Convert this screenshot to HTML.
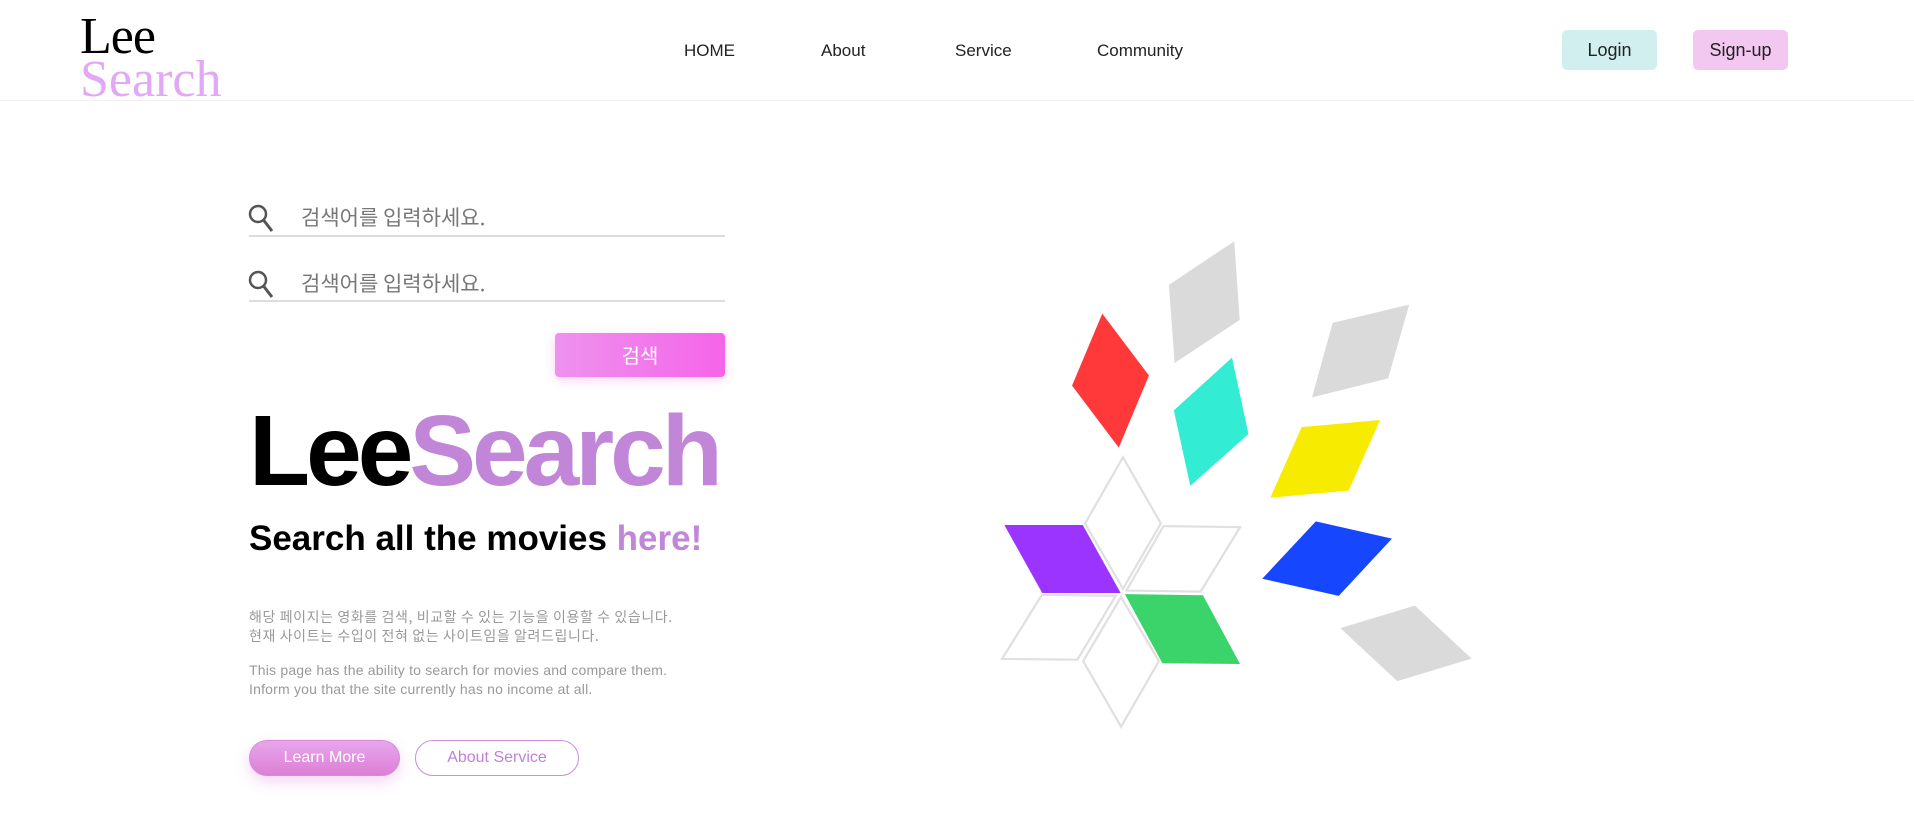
<!DOCTYPE html>
<html><head><meta charset="utf-8"><style>
*{margin:0;padding:0;box-sizing:border-box}
body{width:1914px;height:838px;background:#fff;position:relative;overflow:hidden;font-family:"Liberation Sans","Noto Sans CJK KR",sans-serif}
.abs{position:absolute;white-space:nowrap}
.logo{font-family:"Liberation Serif",serif;font-size:52px;line-height:1;letter-spacing:-1px}
.nav{font-size:17px;color:#222;top:41px}
.btn{position:absolute;top:30px;height:40px;width:95px;border-radius:5px;font-size:18px;color:#222;text-align:center;line-height:40px}
.inp{position:absolute;left:249px;width:476px;border-bottom:2px solid #ddd;height:0}
.ph{font-size:21px;color:#777;font-family:"Noto Sans CJK KR",sans-serif}
.p{font-size:14px;color:#999;left:249px;font-family:"Noto Sans CJK KR",sans-serif;letter-spacing:0.6px}
</style></head><body>
<div class="abs logo" style="left:80px;top:11px;color:#000">Lee</div>
<div class="abs logo" style="left:80px;top:54px;color:#e2a8f6;letter-spacing:0">Search</div>
<div class="abs nav" style="left:684px">HOME</div>
<div class="abs nav" style="left:821px">About</div>
<div class="abs nav" style="left:955px">Service</div>
<div class="abs nav" style="left:1097px">Community</div>
<div class="btn" style="left:1562px;background:#d0efee">Login</div>
<div class="btn" style="left:1693px;background:#f2c8f1">Sign-up</div>
<div class="abs" style="left:0;top:100px;width:1914px;height:1px;background:#eee"></div>

<svg class="abs" style="left:248px;top:202px" width="40" height="40"><circle cx="10" cy="12" r="8" fill="none" stroke="#555" stroke-width="2.5"/><line x1="15.5" y1="18" x2="24" y2="29" stroke="#555" stroke-width="3"/></svg>
<div class="abs ph" style="left:301px;top:202px">검색어를 입력하세요.</div>
<div class="inp" style="top:235px"></div>
<svg class="abs" style="left:248px;top:268px" width="40" height="40"><circle cx="10" cy="12" r="8" fill="none" stroke="#555" stroke-width="2.5"/><line x1="15.5" y1="18" x2="24" y2="29" stroke="#555" stroke-width="3"/></svg>
<div class="abs ph" style="left:301px;top:268px">검색어를 입력하세요.</div>
<div class="inp" style="top:300px"></div>
<div class="abs" style="left:555px;top:333px;width:170px;height:44px;border-radius:4px;background:linear-gradient(90deg,#ee92ee,#f564e8);box-shadow:0 3px 10px rgba(245,120,230,.35);color:#fff;font-size:20px;text-align:center;line-height:44px;font-family:'Noto Sans CJK KR',sans-serif">검색</div>

<div class="abs" style="left:249px;top:401px;font-size:100px;font-weight:bold;letter-spacing:-4px;line-height:1"><span style="color:#000">Lee</span><span style="color:#c286d8">Search</span></div>
<div class="abs" style="left:249px;top:521px;font-size:35px;font-weight:bold;line-height:1;color:#000">Search all the movies <span style="color:#c286d8">here!</span></div>
<div class="abs p" style="top:607px">해당 페이지는 영화를 검색, 비교할 수 있는 기능을 이용할 수 있습니다.</div>
<div class="abs p" style="top:626px">현재 사이트는 수입이 전혀 없는 사이트임을 알려드립니다.</div>
<div class="abs p" style="top:662px;font-family:'Liberation Sans',sans-serif;letter-spacing:0.2px">This page has the ability to search for movies and compare them.</div>
<div class="abs p" style="top:681px;font-family:'Liberation Sans',sans-serif;letter-spacing:0.2px">Inform you that the site currently has no income at all.</div>
<div class="abs" style="left:249px;top:740px;width:151px;height:36px;border-radius:18px;background:linear-gradient(180deg,#e8a6ec,#dc7fd6);border:1px solid #d78ad8;box-shadow:0 6px 14px rgba(230,140,220,.35);color:#fff;font-size:16px;text-align:center;line-height:34px">Learn More</div>
<div class="abs" style="left:415px;top:740px;width:164px;height:36px;border-radius:18px;border:1px solid #c98ee0;color:#c080d8;font-size:16px;text-align:center;line-height:34px">About Service</div>

<svg class="abs" style="left:950px;top:200px" width="600" height="560" viewBox="0 0 1568 1563" preserveAspectRatio="none">
<polygon points="743,115 757,335 587,455 572,237" fill="#dadada"/>
<polygon points="1000,343 1200,292 1145,498 946,551" fill="#dadada"/>
<polygon points="1020,1195 1215,1132 1363,1280 1169,1343" fill="#dadada"/>
<polygon points="398,317 520,490 441,691 319,518" fill="#ff3939"/>
<polygon points="737,440 780,653 628,798 585,587" fill="#33ecd4"/>
<polygon points="919,634 1124,614 1042,811 837,831" fill="#f7ec00"/>
<polygon points="956,897 1155,945 1016,1105 816,1057" fill="#1746ff"/>
<polygon points="142,907 347,907 446,1097 241,1097" fill="#9b34ff"/>
<polygon points="457,1100 661,1103 758,1295 555,1293" fill="#3ad46a"/>
<g fill="none" stroke="#e0e0e0" stroke-width="6">
<polygon points="452,718 551,903 452,1085 353,903"/>
<polygon points="558,910 758,913 655,1093 461,1090"/>
<polygon points="240,1102 433,1105 333,1283 136,1281"/>
<polygon points="447,1108 546,1287 447,1470 348,1287"/>
</g>
</svg>
</body></html>
